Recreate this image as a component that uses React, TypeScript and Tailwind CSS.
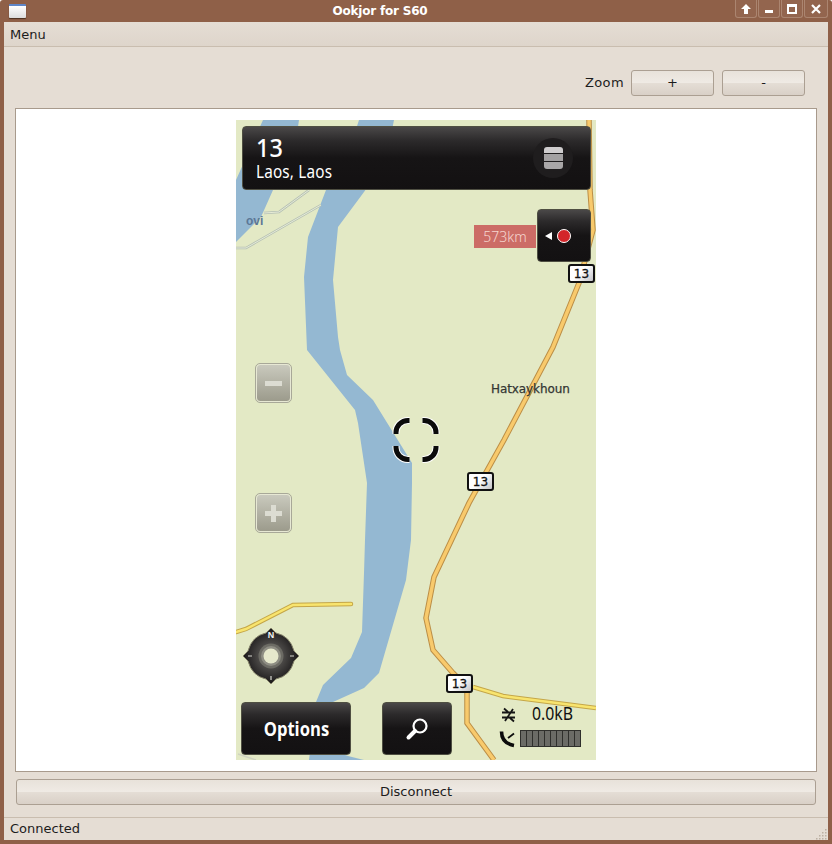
import React from "react";

const btnBlack = "absolute rounded-[4px] border border-[#4f4f42] bg-[linear-gradient(180deg,#4a4848_0%,#2c2a2b_22%,#161415_50%,#131112_100%)]";
const qtBtn = "flex items-center justify-center rounded-[3px] border border-[#ab9f92] bg-[linear-gradient(180deg,#e8e2da_0%,#efeae4_48%,#e4ddd5_52%,#d9d0c7_100%)] text-[13px] text-[#1c1c1c]";

function Sign({ x, y }: { x: number; y: number }) {
  return (
    <div
      className="absolute flex h-[19px] w-[27px] items-center justify-center rounded-[3px] border-2 border-[#111] bg-[linear-gradient(135deg,#ffffff_45%,#c4c4c8_100%)] text-[12px] leading-none text-[#111] [font-family:'DejaVu_Sans',sans-serif] [-webkit-text-stroke:0.3px_#111]"
      style={{ left: x, top: y }}
    >
      13
    </div>
  );
}

function MapDrawing() {
  const r13 =
    "353,0 354,70 357,110 343,163 317,227 268,320 233,383 198,457 190,498 197,530 217,553 231,567 231,603 258,640";
  const branch = "237,567 267,576 360,588";
  const left = "0,512 10,509 57,485 115,484";
  return (
    <svg width="360" height="640" viewBox="0 0 360 640" className="absolute left-0 top-0">
      <rect width="360" height="640" fill="#e3e9c5" />
      <polygon points="27,0 63,0 60,20 37,70 25,97 0,122 0,60" fill="#94b8d2" />
      <polygon
        points="123,0 158,0 150,40 128,72 102,107 97,160 102,217 104,230 111,255 137,280 176,343 176,363 175,420 170,460 143,553 128,568 97,582 100,632 112,636 128,640 73,640 80,582 87,565 115,538 126,512 128,453 129,420 131,363 122,303 119,290 71,230 68,157 72,117 90,70 110,40"
        fill="#94b8d2"
      />
      <polyline points="0,128 10,128 85,85" fill="none" stroke="#b5c0b4" strokeWidth="2.5" />
      <polyline points="0,128 10,128 85,85" fill="none" stroke="#e6ebd6" strokeWidth="1" />
      <polyline points="28,93 43,92 73,70" fill="none" stroke="#b5c0b4" strokeWidth="2.5" />
      <polyline points="28,93 43,92 73,70" fill="none" stroke="#e6ebd6" strokeWidth="1" />
      <polyline points={left} fill="none" stroke="#c4a648" strokeWidth="4.5" strokeLinecap="round" />
      <polyline points={left} fill="none" stroke="#f8e46e" strokeWidth="2.5" strokeLinecap="round" />
      <polyline points={branch} fill="none" stroke="#c4a648" strokeWidth="4.5" />
      <polyline points={branch} fill="none" stroke="#f8e46e" strokeWidth="2.5" />
      <polyline points={r13} fill="none" stroke="#bb8e46" strokeWidth="5.5" />
      <polyline points={r13} fill="none" stroke="#f8ca6c" strokeWidth="3.5" />
      <polyline points="2,634 20,640" fill="none" stroke="#cfd3c0" strokeWidth="1.5" />
    </svg>
  );
}

function Crosshair() {
  return (
    <svg width="50" height="50" viewBox="0 0 50 50" className="absolute left-[155px] top-[295px]">
      {[
        "M18.5 5.5 H17 A12 12 0 0 0 5 17.5 V19",
        "M31.5 5.5 H33 A12 12 0 0 1 45 17.5 V19",
        "M18.5 44.5 H17 A12 12 0 0 1 5 32.5 V31",
        "M31.5 44.5 H33 A12 12 0 0 0 45 32.5 V31",
      ].map((d) => (
        <g key={d} fill="none">
          <path d={d} stroke="#fff" strokeWidth="7" />
          <path d={d} stroke="#0b0b0b" strokeWidth="5" />
        </g>
      ))}
    </svg>
  );
}

function Compass() {
  return (
    <div className="absolute left-[6px] top-[507px] h-[58px] w-[58px]">
      <svg width="58" height="58" viewBox="0 0 58 58" className="absolute left-0 top-0">
        <defs>
          <radialGradient id="cg" cx="50%" cy="50%" r="50%">
            <stop offset="0.45" stopColor="#4a4846" />
            <stop offset="1" stopColor="#181617" />
          </radialGradient>
        </defs>
        <path
          d="M29 1 L34 6 Q48 9 52 24 L57 29 L52 34 Q48 49 34 52 L29 57 L24 52 Q10 49 6 34 L1 29 L6 24 Q10 9 24 6 Z"
          fill="url(#cg)"
          stroke="#85836a"
          strokeWidth="1"
        />
        <circle cx="29" cy="29" r="12.5" fill="#6c6b64" />
        <circle cx="29" cy="29" r="10" fill="#8f8e84" />
        <circle cx="29" cy="29" r="7.5" fill="#e6e8cc" />
        <path d="M6 29h4M48 29h4M29 49v4" stroke="#d8d8d0" strokeWidth="1.2" />
      </svg>
      <span className="absolute left-0 right-0 top-[3px] text-center text-[9px] font-bold leading-[10px] text-[#f2f2f2] [font-family:'Liberation_Sans',sans-serif]">
        N
      </span>
    </div>
  );
}

function MapPanel() {
  return (
    <div className="relative h-[640px] w-[360px] overflow-hidden">
      <MapDrawing />

      <div className="absolute left-[255px] top-[262px] text-[12px] leading-[14px] tracking-[-0.1px] text-[#333633] [font-family:'DejaVu_Sans',sans-serif] [-webkit-text-stroke:0.25px_#333633]">
        Hatxaykhoun
      </div>
      <div className="absolute left-[10px] top-[94px] text-[12px] font-bold leading-[14px] text-[#5c7796] [font-family:'Liberation_Sans',sans-serif]">
        ovi
      </div>

      <Sign x={332} y={144} />
      <Sign x={231} y={352} />
      <Sign x={210} y={554} />

      <div className={`${btnBlack} left-[6px] top-[6px] flex h-[64px] w-[349px] items-center justify-between pl-[13px] pr-[17px] text-white [font-family:'Noto_Sans',sans-serif]`}>
        <div className="flex flex-col gap-[2px]">
          <span className="origin-left scale-x-[0.9] text-[26px] font-medium leading-[24px]">13</span>
          <span className="origin-left scale-x-[0.85] text-[18px] leading-[21px] tracking-[0.2px]">Laos, Laos</span>
        </div>
        <div className="flex h-[40px] w-[40px] flex-col items-center justify-center gap-[1px] rounded-full bg-[#1f1d1e]">
          <span className="h-[6px] w-[19px] rounded-t-[3px] bg-[#cfcdce]" />
          <span className="h-[7px] w-[19px] bg-[#a3a1a2]" />
          <span className="h-[7px] w-[19px] rounded-b-[3px] bg-[#a9a7a8]" />
        </div>
      </div>

      <div className="absolute left-[238px] top-[105px] flex h-[23px] w-[62px] items-center justify-center bg-[#cc6c66] text-[14px] font-light text-[#f6d6d0] [font-family:'Noto_Sans',sans-serif]">
        573km
      </div>
      <div className={`${btnBlack} left-[301px] top-[89px] flex h-[53px] w-[54px] items-center justify-center gap-[5px] pr-[12px]`}>
        <span className="h-0 w-0 border-y-[4px] border-r-[7px] border-y-transparent border-r-white" />
        <span className="h-[14px] w-[14px] rounded-full border-[1.5px] border-white bg-[#d3262a]" />
      </div>

      <div className="absolute left-[20px] top-[244px] flex h-[38px] w-[35px] items-center justify-center rounded-[4px] border border-[#e7e8d4] bg-[linear-gradient(180deg,#c9c9bd_0%,#9c9b8c_100%)] outline outline-1 outline-[#a8a898]">
        <span className="h-[5px] w-[17px] bg-[#dcdcd2]" />
      </div>
      <div className="absolute left-[20px] top-[374px] flex h-[38px] w-[35px] items-center justify-center rounded-[4px] border border-[#e7e8d4] bg-[linear-gradient(180deg,#c9c9bd_0%,#9c9b8c_100%)] outline outline-1 outline-[#a8a898]">
        <span className="relative h-[17px] w-[17px]">
          <span className="absolute left-0 top-[6px] h-[5px] w-[17px] bg-[#dcdcd2]" />
          <span className="absolute left-[6px] top-0 h-[17px] w-[5px] bg-[#dcdcd2]" />
        </span>
      </div>

      <Crosshair />
      <Compass />

      <div className={`${btnBlack} left-[5px] top-[582px] flex h-[53px] w-[110px] items-center justify-center text-[20px] font-bold text-white [font-family:'Open_Sans',sans-serif]`}>
        <span className="inline-block scale-x-[0.83]">Options</span>
      </div>
      <div className={`${btnBlack} left-[146px] top-[582px] flex h-[53px] w-[70px] items-center justify-center`}>
        <svg width="24" height="24" viewBox="0 0 24 24" fill="none">
          <circle cx="15" cy="9" r="6.5" stroke="#fff" strokeWidth="2.2" />
          <path d="M10 14 L3.5 20.5" stroke="#fff" strokeWidth="4" strokeLinecap="round" />
        </svg>
      </div>

      <svg width="16" height="16" viewBox="0 0 16 16" className="absolute left-[265px] top-[587px]">
        <path d="M1 5.5H14M1 10.5H14M4 14L12 2M3 1.5 7 5M9 11l4 3.5" stroke="#151515" strokeWidth="1.8" fill="none" />
      </svg>
      <div className="absolute left-[296px] top-[583px] origin-left scale-x-[0.88] text-[18px] leading-[20px] text-[#101010] [font-family:'Noto_Sans',sans-serif]">
        0.0kB
      </div>
      <svg width="18" height="18" viewBox="0 0 18 18" className="absolute left-[263px] top-[610px]">
        <path d="M2.5 1.5 C2.5 9 7 14 15 15.5" stroke="#0c0c0c" strokeWidth="3.6" fill="none" />
        <path d="M9 8 L15 3.5" stroke="#0c0c0c" strokeWidth="1.8" fill="none" />
      </svg>
      <div className="absolute left-[284px] top-[610px] flex h-[17px] w-[61px] gap-[1px] bg-[#2f2f2c] p-[1px]">
        {Array.from({ length: 10 }).map((_, i) => (
          <span key={i} className="h-full flex-1 bg-[#6b6b66]" />
        ))}
      </div>
    </div>
  );
}

function WinBtn({ children, w = "w-[22px]" }: { children: React.ReactNode; w?: string }) {
  return (
    <div className={`flex h-[18px] ${w} items-center justify-center rounded-b-[3px] border border-t-0 border-[#ab8570] bg-[#93654e]`}>
      {children}
    </div>
  );
}

export default function App() {
  return (
    <div className="flex h-[844px] w-[832px] flex-col overflow-hidden rounded-t-[3px] border-x-[4px] border-b-[4px] border-[#8f6048] bg-[#e5ddd4] text-[#1c1c1c] [font-family:'DejaVu_Sans',sans-serif]">
      <div className="relative flex h-[22px] shrink-0 items-center bg-[#8f6048]">
        <div className="ml-[5px] h-[14px] w-[17px] rounded-[1px] border-t-2 border-[#5f86c8] bg-[linear-gradient(180deg,#ffffff,#dddddd)] shadow-[0_1px_1px_#4a3020]" />
        <div className="absolute left-0 right-[72px] top-[3px] text-center text-[12px] font-bold leading-[16px] tracking-[-0.2px] text-white">
          Ookjor for S60
        </div>
        <div className="absolute right-0 top-0 flex gap-[1px]">
          <WinBtn>
            <svg width="12" height="12" viewBox="0 0 12 12"><path d="M6 1 L11 6 H8 V11 H4 V6 H1 Z" fill="#fff" /></svg>
          </WinBtn>
          <WinBtn>
            <span className="mt-[6px] h-[3px] w-[8px] bg-white" />
          </WinBtn>
          <WinBtn>
            <span className="h-[10px] w-[10px] border-2 border-t-[3px] border-white" />
          </WinBtn>
          <WinBtn w="w-[24px]">
            <svg width="12" height="12" viewBox="0 0 12 12"><path d="M2 2 L10 10 M10 2 L2 10" stroke="#fff" strokeWidth="2.2" /></svg>
          </WinBtn>
        </div>
      </div>

      <div className="flex h-[25px] shrink-0 items-center border-b border-[#c9bdaf] bg-[linear-gradient(180deg,#e5ddd4,#ded5cb)] pl-[6px] pt-[1px] text-[13px]">
        Menu
      </div>

      <div className="flex h-[61px] shrink-0 items-start justify-end pr-[23px] pt-[23px] text-[13px]">
        <span className="mr-[7px] leading-[26px] tracking-[0.4px]">Zoom</span>
        <button className={`${qtBtn} h-[26px] w-[83px]`}>+</button>
        <button className={`${qtBtn} ml-[8px] h-[26px] w-[83px]`}>-</button>
      </div>

      <div className="mx-[11px] flex h-[664px] shrink-0 items-center justify-center border border-[#a89a8c] bg-white">
        <MapPanel />
      </div>

      <button className={`${qtBtn} mx-[12px] mt-[7px] h-[26px] shrink-0`}>Disconnect</button>

      <div className="relative mt-[12px] flex flex-1 items-center border-t border-[#c9bdaf] pl-[6px] text-[13px]">
        Connected
        <svg width="12" height="12" viewBox="0 0 12 12" className="absolute bottom-0 right-0">
          {[[9,1],[6,4],[9,4],[3,7],[6,7],[9,7],[0,10],[3,10],[6,10],[9,10]].map(([x, y]) => (
            <rect key={`${x}-${y}`} x={x} y={y} width="1.5" height="1.5" fill="#bcb0a2" />
          ))}
        </svg>
      </div>
    </div>
  );
}
